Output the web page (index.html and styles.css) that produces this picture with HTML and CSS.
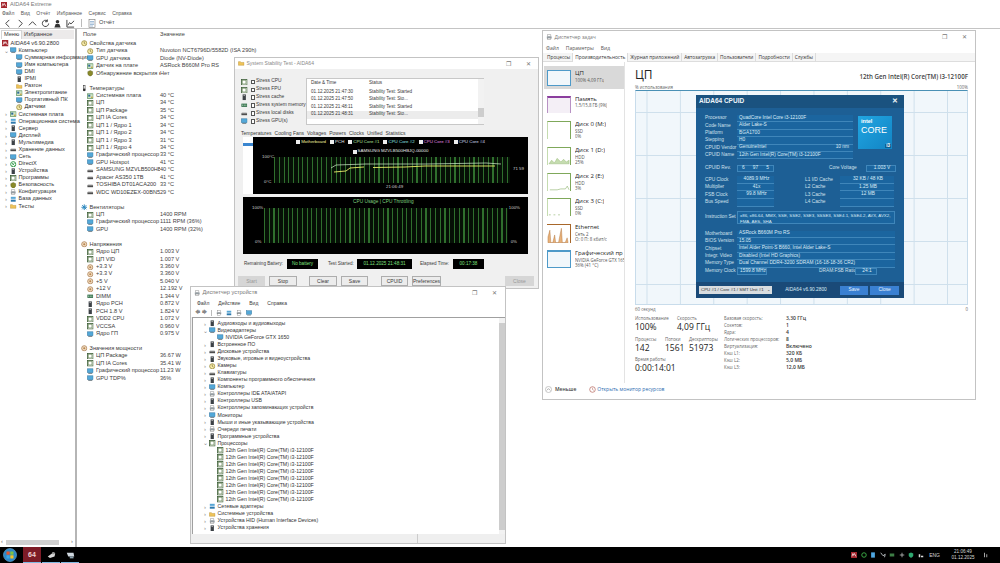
FILE: index.html
```html
<!DOCTYPE html>
<html lang="ru">
<head>
<meta charset="utf-8">
<title>AIDA64</title>
<link rel="stylesheet" href="styles.css">
</head>
<body>
<svg class="defs" aria-hidden="true">
  <symbol id="chip" viewBox="0 0 8 8"><rect x=".5" y=".5" width="7" height="7" fill="#dfe8d8" stroke="#3f5f3a"/><rect x="2" y="2" width="4" height="4" fill="#fff" stroke="#6d8a5f" stroke-width=".6"/></symbol>
  <symbol id="mon" viewBox="0 0 8 8"><rect x=".5" y="1" width="7" height="4.8" fill="#53a8d8" stroke="#2a6f9c" stroke-width=".6"/><rect x="1.5" y="6.2" width="5" height="1.2" fill="#7d8b93"/></symbol>
  <symbol id="board" viewBox="0 0 8 8"><rect x=".5" y="1" width="7" height="6" fill="#cfe3c5" stroke="#3d7d45" stroke-width=".7"/><rect x="1.5" y="2" width="2.5" height="2.5" fill="#2f6a9a"/><rect x="5" y="4.5" width="2" height="1.5" fill="#c7a03a"/></symbol>
  <symbol id="volt" viewBox="0 0 8 8"><circle cx="4" cy="4" r="3.2" fill="#f1dcc0" stroke="#a0703f" stroke-width=".8"/><circle cx="4" cy="4" r="1.3" fill="#b8854f"/></symbol>
  <symbol id="hdd" viewBox="0 0 8 8"><rect x=".5" y="4" width="7" height="2.4" fill="#4d4d4d"/><rect x="1" y="3.2" width="6" height=".8" fill="#999"/></symbol>
  <symbol id="ram" viewBox="0 0 8 8"><rect x=".5" y="2" width="7" height="4" fill="#2e6b46"/><rect x="1.3" y="3" width="1.4" height="2" fill="#8fb99d"/><rect x="3.3" y="3" width="1.4" height="2" fill="#8fb99d"/><rect x="5.3" y="3" width="1.4" height="2" fill="#8fb99d"/></symbol>
  <symbol id="tall" viewBox="0 0 8 8"><rect x="2" y=".5" width="4" height="7" fill="#3c4146"/><rect x="3" y="1.5" width="2" height="1" fill="#bbb"/></symbol>
  <symbol id="fan" viewBox="0 0 8 8"><path d="M4 .5v7M.5 4h7M1.5 1.5l5 5M6.5 1.5l-5 5" stroke="#2a86bd" stroke-width="1.2"/></symbol>
  <symbol id="sens" viewBox="0 0 8 8"><circle cx="4" cy="4" r="3.2" fill="#f6eaa8" stroke="#8a7a28" stroke-width=".8"/><path d="M4 1.8V4l1.6 1" stroke="#5d5320" stroke-width=".7" fill="none"/></symbol>
  <symbol id="shield" viewBox="0 0 8 8"><path d="M4 .6 7 2v2.2C7 6 5.5 7 4 7.6 2.500 7 1 6 1 4.200V2z" fill="#8a8a2a" stroke="#565a1a" stroke-width=".5"/></symbol>
  <symbol id="therm" viewBox="0 0 8 8"><rect x="3" y=".5" width="2" height="5" fill="#fff" stroke="#333" stroke-width=".7"/><circle cx="4" cy="6" r="1.6" fill="#333"/></symbol>
  <symbol id="folder" viewBox="0 0 8 8"><path d="M.5 2h2.500l1 1h3.500v3.500h-7z" fill="#eec35a" stroke="#b48a2a" stroke-width=".5"/></symbol>
  <symbol id="net" viewBox="0 0 8 8"><rect x="1" y="1" width="6" height="2.500" fill="#58a7d6"/><rect x="1" y="4.500" width="6" height="2.500" fill="#2d79ad"/></symbol>
  <symbol id="xbox" viewBox="0 0 8 8"><circle cx="4" cy="4" r="3.200" fill="#fff" stroke="#2f9a46" stroke-width="1.200"/><path d="M2.500 2.500l3 3M5.500 2.500l-3 3" stroke="#2f9a46"/></symbol>
  <symbol id="prn" viewBox="0 0 8 8"><rect x="2" y="1" width="4" height="2" fill="#fff" stroke="#777" stroke-width=".5"/><rect x="1" y="3" width="6" height="2.500" fill="#9aa3a9"/><rect x="2" y="5" width="4" height="2" fill="#fff" stroke="#777" stroke-width=".5"/></symbol>
  <symbol id="aida" viewBox="0 0 8 8"><rect width="8" height="8" fill="#a3262e"/><path d="M1.300 6 2.500 2l1 2.500L4.600 2 6.700 6" stroke="#fff" stroke-width=".9" fill="none"/></symbol>
</svg>

<div class="screen">
  <div class="aida">
    <div class="aida-title"><svg class="ic title-ic"><use href="#aida"/></svg><span>AIDA64 Extreme</span></div>
    <div class="aida-menu"><span>Файл</span><span>Вид</span><span>Отчёт</span><span>Избранное</span><span>Сервис</span><span>Справка</span></div>
    <div class="aida-tools">
      <svg class="tb" viewBox="0 0 10 10"><path d="M7 1 3 5l4 4" /></svg>
      <svg class="tb" viewBox="0 0 10 10"><path d="m3 1 4 4-4 4" /></svg>
      <svg class="tb" viewBox="0 0 10 10"><path d="m1 7 4-4 4 4" /></svg>
      <svg class="tb" viewBox="0 0 10 10"><path d="M8.500 5A3.500 3.500 0 1 1 7 2M7 .5V3H4.500" /></svg>
      <svg class="tb solid" viewBox="0 0 10 10"><circle cx="5" cy="3" r="2"/><path d="M1.500 9.500 3 5.500h4l1.500 4z"/></svg>
      <svg class="tb" viewBox="0 0 10 10"><path d="M1 1v8h8M2 7l2-3 1.500 1.500L9 2" /></svg>
      <span class="tb-sep"></span>
      <svg class="tb-report" viewBox="0 0 8 9"><rect x="1" y=".5" width="6" height="8" fill="#fff" stroke="#777" stroke-width=".6"/><path d="M2 2.500h4M2 4h4M2 5.500h4M2 7h3" stroke="#4b7fb0" stroke-width=".5"/></svg>
      <span class="tb-label">Отчёт</span>
    </div>
    <div class="aida-main">
      <div class="tree-pane">
        <div class="tree-tabs"><span class="t-on">Меню</span><span class="t-off">Избранное</span></div>
        <div class="tree">
          <div class="tr"><svg class="ic"><use href="#aida"/></svg>AIDA64 v6.90.2800</div>
          <div class="tr l1"><i class="chev">⌄</i><svg class="ic"><use href="#mon"/></svg>Компьютер</div>
          <div class="tr l2"><svg class="ic"><use href="#mon"/></svg>Суммарная информация</div>
          <div class="tr l2"><svg class="ic"><use href="#mon"/></svg>Имя компьютера</div>
          <div class="tr l2"><svg class="ic"><use href="#mon"/></svg>DMI</div>
          <div class="tr l2"><svg class="ic"><use href="#tall"/></svg>IPMI</div>
          <div class="tr l2"><svg class="ic"><use href="#folder"/></svg>Разгон</div>
          <div class="tr l2"><svg class="ic"><use href="#board"/></svg>Электропитание</div>
          <div class="tr l2"><svg class="ic"><use href="#mon"/></svg>Портативный ПК</div>
          <div class="tr l2 sel"><svg class="ic"><use href="#sens"/></svg>Датчики</div>
          <div class="tr l1"><i class="chev">›</i><svg class="ic"><use href="#board"/></svg>Системная плата</div>
          <div class="tr l1"><i class="chev">›</i><svg class="ic"><use href="#net"/></svg>Операционная система</div>
          <div class="tr l1"><i class="chev">›</i><svg class="ic"><use href="#tall"/></svg>Сервер</div>
          <div class="tr l1"><i class="chev">›</i><svg class="ic"><use href="#mon"/></svg>Дисплей</div>
          <div class="tr l1"><i class="chev">›</i><svg class="ic"><use href="#tall"/></svg>Мультимедиа</div>
          <div class="tr l1"><i class="chev">›</i><svg class="ic"><use href="#hdd"/></svg>Хранение данных</div>
          <div class="tr l1"><i class="chev">›</i><svg class="ic"><use href="#mon"/></svg>Сеть</div>
          <div class="tr l1"><i class="chev">›</i><svg class="ic"><use href="#xbox"/></svg>DirectX</div>
          <div class="tr l1"><i class="chev">›</i><svg class="ic"><use href="#tall"/></svg>Устройства</div>
          <div class="tr l1"><i class="chev">›</i><svg class="ic"><use href="#chip"/></svg>Программы</div>
          <div class="tr l1"><i class="chev">›</i><svg class="ic"><use href="#shield"/></svg>Безопасность</div>
          <div class="tr l1"><i class="chev">›</i><svg class="ic"><use href="#prn"/></svg>Конфигурация</div>
          <div class="tr l1"><i class="chev">›</i><svg class="ic"><use href="#net"/></svg>База данных</div>
          <div class="tr l1"><i class="chev">›</i><svg class="ic"><use href="#folder"/></svg>Тесты</div>
        </div>
        <div class="hscroll"><i>‹</i><span></span><i>›</i></div>
      </div>
      <div class="list-pane">
        <div class="list-head"><span>Поле</span><span>Значение</span></div>
        <div class="list">
          <div class="sec"><svg class="ic"><use href="#sens"/></svg>Свойства датчика</div>
          <div class="it"><svg class="ic"><use href="#sens"/></svg><span class="f">Тип датчика</span><span class="v">Nuvoton NCT6796D/5582D (ISA 290h)</span></div>
          <div class="it"><svg class="ic"><use href="#mon"/></svg><span class="f">GPU датчика</span><span class="v">Diode (NV-Diode)</span></div>
          <div class="it"><svg class="ic"><use href="#board"/></svg><span class="f">Датчик на плате</span><span class="v">ASRock B660M Pro RS</span></div>
          <div class="it"><svg class="ic"><use href="#shield"/></svg><span class="f">Обнаружение вскрытия корпуса</span><span class="v">Нет</span></div>
          <div class="gap"></div>
          <div class="sec"><svg class="ic"><use href="#therm"/></svg>Температуры</div>
          <div class="it"><svg class="ic"><use href="#board"/></svg><span class="f">Системная плата</span><span class="v">40 °C</span></div>
          <div class="it"><svg class="ic"><use href="#chip"/></svg><span class="f">ЦП</span><span class="v">34 °C</span></div>
          <div class="it"><svg class="ic"><use href="#chip"/></svg><span class="f">ЦП Package</span><span class="v">35 °C</span></div>
          <div class="it"><svg class="ic"><use href="#chip"/></svg><span class="f">ЦП IA Cores</span><span class="v">34 °C</span></div>
          <div class="it"><svg class="ic"><use href="#chip"/></svg><span class="f">ЦП 1 / Ядро 1</span><span class="v">34 °C</span></div>
          <div class="it"><svg class="ic"><use href="#chip"/></svg><span class="f">ЦП 1 / Ядро 2</span><span class="v">34 °C</span></div>
          <div class="it"><svg class="ic"><use href="#chip"/></svg><span class="f">ЦП 1 / Ядро 3</span><span class="v">31 °C</span></div>
          <div class="it"><svg class="ic"><use href="#chip"/></svg><span class="f">ЦП 1 / Ядро 4</span><span class="v">34 °C</span></div>
          <div class="it"><svg class="ic"><use href="#mon"/></svg><span class="f">Графический процессор</span><span class="v">33 °C</span></div>
          <div class="it"><svg class="ic"><use href="#mon"/></svg><span class="f">GPU Hotspot</span><span class="v">41 °C</span></div>
          <div class="it"><svg class="ic"><use href="#hdd"/></svg><span class="f">SAMSUNG MZVLB500HBJQ...</span><span class="v">40 °C</span></div>
          <div class="it"><svg class="ic"><use href="#hdd"/></svg><span class="f">Apacer AS350 1TB</span><span class="v">41 °C</span></div>
          <div class="it"><svg class="ic"><use href="#hdd"/></svg><span class="f">TOSHIBA DT01ACA200</span><span class="v">33 °C</span></div>
          <div class="it"><svg class="ic"><use href="#hdd"/></svg><span class="f">WDC WD10EZEX-00BN5A0</span><span class="v">29 °C</span></div>
          <div class="gap"></div>
          <div class="sec"><svg class="ic"><use href="#fan"/></svg>Вентиляторы</div>
          <div class="it"><svg class="ic"><use href="#chip"/></svg><span class="f">ЦП</span><span class="v">1400 RPM</span></div>
          <div class="it"><svg class="ic"><use href="#mon"/></svg><span class="f">Графический процессор</span><span class="v">1111 RPM (36%)</span></div>
          <div class="it"><svg class="ic"><use href="#mon"/></svg><span class="f">GPU</span><span class="v">1400 RPM (32%)</span></div>
          <div class="gap"></div>
          <div class="sec"><svg class="ic"><use href="#volt"/></svg>Напряжения</div>
          <div class="it"><svg class="ic"><use href="#chip"/></svg><span class="f">Ядро ЦП</span><span class="v">1.003 V</span></div>
          <div class="it"><svg class="ic"><use href="#chip"/></svg><span class="f">ЦП VID</span><span class="v">1.007 V</span></div>
          <div class="it"><svg class="ic"><use href="#volt"/></svg><span class="f">+3.3 V</span><span class="v">3.360 V</span></div>
          <div class="it"><svg class="ic"><use href="#volt"/></svg><span class="f">+3.3 V</span><span class="v">3.360 V</span></div>
          <div class="it"><svg class="ic"><use href="#volt"/></svg><span class="f">+5 V</span><span class="v">5.040 V</span></div>
          <div class="it"><svg class="ic"><use href="#volt"/></svg><span class="f">+12 V</span><span class="v">12.192 V</span></div>
          <div class="it"><svg class="ic"><use href="#ram"/></svg><span class="f">DIMM</span><span class="v">1.344 V</span></div>
          <div class="it"><svg class="ic"><use href="#tall"/></svg><span class="f">Ядро PCH</span><span class="v">0.872 V</span></div>
          <div class="it"><svg class="ic"><use href="#tall"/></svg><span class="f">PCH 1.8 V</span><span class="v">1.824 V</span></div>
          <div class="it"><svg class="ic"><use href="#chip"/></svg><span class="f">VDD2 CPU</span><span class="v">1.072 V</span></div>
          <div class="it"><svg class="ic"><use href="#chip"/></svg><span class="f">VCCSA</span><span class="v">0.960 V</span></div>
          <div class="it"><svg class="ic"><use href="#mon"/></svg><span class="f">Ядро ГП</span><span class="v">0.975 V</span></div>
          <div class="gap"></div>
          <div class="sec"><svg class="ic"><use href="#volt"/></svg>Значения мощности</div>
          <div class="it"><svg class="ic"><use href="#chip"/></svg><span class="f">ЦП Package</span><span class="v">36.67 W</span></div>
          <div class="it"><svg class="ic"><use href="#chip"/></svg><span class="f">ЦП IA Cores</span><span class="v">35.41 W</span></div>
          <div class="it"><svg class="ic"><use href="#mon"/></svg><span class="f">Графический процессор</span><span class="v">11.23 W</span></div>
          <div class="it"><svg class="ic"><use href="#mon"/></svg><span class="f">GPU TDP%</span><span class="v">36%</span></div>
        </div>
      </div>
    </div>
  </div>

  <div class="taskbar">
    <svg class="orb" viewBox="0 0 14 14"><circle cx="7" cy="7" r="6.500" fill="#2c86c6"/><circle cx="7" cy="7" r="6.500" fill="none" stroke="#6fb7e0" stroke-width=".6"/><rect x="3.500" y="3.500" width="3.200" height="3.200" fill="#e4572e"/><rect x="7.300" y="3.500" width="3.200" height="3.200" fill="#7fc241"/><rect x="3.500" y="7.300" width="3.200" height="3.200" fill="#3aa6e6"/><rect x="7.300" y="7.300" width="3.200" height="3.200" fill="#f3c324"/></svg>
    <div class="task-btn task-64"><b>64</b></div>
    <div class="task-btn"><svg class="task-ic" viewBox="0 0 12 10"><path d="M1 7 8 2l3 1-1 4-6 2z" fill="#d9d9d9"/><rect x="7" y="1" width="3" height="3" fill="#8f8f8f"/></svg></div>
    <div class="task-btn"><svg class="task-ic" viewBox="0 0 12 10"><path d="M1 2h9l1 5H3z" fill="#cfd8df"/><rect x="5" y="7" width="5" height="2.500" fill="#8aa0ad"/></svg></div>
    <div class="tray">
      <svg class="tr-ic" viewBox="0 0 8 8"><use href="#aida"/></svg>
      <svg class="tr-ic" viewBox="0 0 8 8"><circle cx="4" cy="4" r="3" fill="none" stroke="#3fb34a" stroke-width="1.200"/></svg>
      <svg class="tr-ic" viewBox="0 0 8 8"><rect x="1.500" y=".5" width="5" height="7" fill="#4ea6e0"/></svg>
      <svg class="tr-ic" viewBox="0 0 8 8"><path d="M1 1l3 4 3-2-1 4" stroke="#dfe6ea" fill="none"/></svg>
      <svg class="tr-ic" viewBox="0 0 8 8"><rect x="1" y="2" width="6" height="4" fill="#3d7d45"/></svg>
      <svg class="tr-ic" viewBox="0 0 8 8"><path d="M4 1v6M1 4h6" stroke="#c9c9c9"/></svg>
      <svg class="tr-ic" viewBox="0 0 8 8"><path d="M4 .6 7 2v2.200C7 6 5.500 7 4 7.600 2.500 7 1 6 1 4.200V2z" fill="#2fa870"/></svg>
      <svg class="tr-ic" viewBox="0 0 8 8"><rect x="1" y="3" width="2" height="4" fill="#ddd"/><rect x="4" y="5" width="3" height="2" fill="#ddd"/></svg>
      <span class="tray-t">ENG</span>
      <div class="clock"><span>21:06:49</span><span>01.12.2025</span></div>
      <svg class="tr-ic note" viewBox="0 0 8 8"><path d="M2 1v6M5 3v4" stroke="#ddd"/></svg>
    </div>
  </div>

  <!-- Stability test window -->
  <section class="win stab">
    <div class="stab-title"><svg class="ic"><use href="#folder"/></svg><span class="grow">System Stability Test - AIDA64</span><span class="wbtn">❐</span><span class="wbtn">✕</span></div>
    <div class="stab-top">
      <div class="checks">
        <div class="ck"><svg class="ic"><use href="#chip"/></svg><i class="box"></i>Stress CPU</div>
        <div class="ck"><svg class="ic"><use href="#chip"/></svg><i class="box"></i>Stress FPU</div>
        <div class="ck"><svg class="ic"><use href="#tall"/></svg><i class="box"></i>Stress cache</div>
        <div class="ck"><svg class="ic"><use href="#ram"/></svg><i class="box"></i>Stress system memory</div>
        <div class="ck"><svg class="ic"><use href="#hdd"/></svg><i class="box"></i>Stress local disks</div>
        <div class="ck"><svg class="ic"><use href="#mon"/></svg><i class="box"></i>Stress GPU(s)</div>
      </div>
      <div class="log">
        <div class="log-rows">
          <div class="lr head"><span>Date &amp; Time</span><span>Status</span></div>
          <div class="lr"><span>01.12.2025 21:47:30</span><span>Stability Test: Started</span></div>
          <div class="lr"><span>01.12.2025 21:47:50</span><span>Stability Test: Sto...</span></div>
          <div class="lr"><span>01.12.2025 21:48:11</span><span>Stability Test: Started</span></div>
          <div class="lr alt"><span>01.12.2025 21:48:31</span><span>Stability Test: Sto...</span></div>
        </div>
        <div class="vscroll"><i class="thumb"></i></div>
      </div>
    </div>
    <div class="stab-tabs"><span>Temperatures</span><span>Cooling Fans</span><span>Voltages</span><span>Powers</span><span>Clocks</span><span>Unified</span><span>Statistics</span></div>
    <div class="g1-wrap">
      <div class="strip"><i></i></div>
      <div class="graph g1">
        <div class="bars bars1"></div>
        <div class="legend">
          <div><span class="lg c1"><i></i>Motherboard</span><span class="lg c2"><i></i>PCH</span><span class="lg c3"><i></i>CPU Core #1</span><span class="lg c4"><i></i>CPU Core #2</span><span class="lg c5"><i></i>CPU Core #3</span><span class="lg c6"><i></i>CPU Core #4</span></div>
          <div><span class="lg c2"><i></i>SAMSUNG MZVLB500HBJQ-00000</span></div>
        </div>
        <svg class="curve" viewBox="0 0 275 57"><path d="M78 31l5-3 30-1 60 0 60-1 15 1" stroke="#d7f0d0" fill="none" stroke-width=".7"/><path d="M81 35l12-1 4-3 14-1M120 30.500l32-.5 20-1 20 0 50 0" stroke="#ecec6a" fill="none" stroke-width=".9"/></svg>
        <span class="scale s-top">100°C</span><span class="scale s-bot">0°C</span><span class="scale s-time">21:06:49</span><span class="scale s-right">71 59</span>
      </div>
    </div>
    <div class="graph g2">
      <div class="bars bars2"></div>
      <span class="g2-title">CPU Usage | CPU Throttling</span>
      <span class="scale t2">100%</span><span class="scale b2">0%</span><span class="scale t2r">100%</span><span class="scale b2r">0%</span>
    </div>
    <div class="stab-info">
      <span class="inf l1w">Remaining Battery:</span><span class="lcd w1">No battery</span>
      <span class="inf l2w">Test Started:</span><span class="lcd w2">01.12.2025 21:48:31</span>
      <span class="inf l3w">Elapsed Time:</span><span class="lcd w3">00:17:38</span>
    </div>
    <div class="stab-btns">
      <span class="btn off w27">Start</span><span class="btn w28">Stop</span>
      <span class="btn w28 m12">Clear</span><span class="btn w27">Save</span>
      <span class="btn w27 m13">CPUID</span><span class="btn w29">Preferences</span>
      <span class="btn off w29 mauto">Close</span>
    </div>
  </section>

  <!-- Device manager -->
  <section class="win dm">
    <div class="dm-title"><svg class="ic"><use href="#prn"/></svg><span class="grow">Диспетчер устройств</span><span class="wbtn">❐</span><span class="wbtn">✕</span></div>
    <div class="dm-menu"><span>Файл</span><span>Действие</span><span>Вид</span><span>Справка</span></div>
    <div class="dm-tools">
      <i class="arrow">🡄</i><i class="arrow">🡆</i><span class="tb-sep short"></span>
      <svg class="ic big"><use href="#prn"/></svg><svg class="ic big"><use href="#net"/></svg><svg class="ic big"><use href="#prn"/></svg><svg class="ic big"><use href="#mon"/></svg>
    </div>
    <div class="dm-body">
      <div class="dm-list">
        <div class="dr"><i class="chev">›</i><svg class="ic"><use href="#tall"/></svg>Аудиовходы и аудиовыходы</div>
        <div class="dr"><i class="chev">⌄</i><svg class="ic"><use href="#mon"/></svg>Видеоадаптеры</div>
        <div class="dr child"><svg class="ic"><use href="#mon"/></svg>NVIDIA GeForce GTX 1650</div>
        <div class="dr"><i class="chev">›</i><svg class="ic"><use href="#tall"/></svg>Встроенное ПО</div>
        <div class="dr"><i class="chev">›</i><svg class="ic"><use href="#hdd"/></svg>Дисковые устройства</div>
        <div class="dr"><i class="chev">›</i><svg class="ic"><use href="#tall"/></svg>Звуковые, игровые и видеоустройства</div>
        <div class="dr"><i class="chev">›</i><svg class="ic"><use href="#sens"/></svg>Камеры</div>
        <div class="dr"><i class="chev">›</i><svg class="ic"><use href="#hdd"/></svg>Клавиатуры</div>
        <div class="dr"><i class="chev">›</i><svg class="ic"><use href="#tall"/></svg>Компоненты программного обеспечения</div>
        <div class="dr"><i class="chev">›</i><svg class="ic"><use href="#mon"/></svg>Компьютер</div>
        <div class="dr"><i class="chev">›</i><svg class="ic"><use href="#prn"/></svg>Контроллеры IDE ATA/ATAPI</div>
        <div class="dr"><i class="chev">›</i><svg class="ic"><use href="#tall"/></svg>Контроллеры USB</div>
        <div class="dr"><i class="chev">›</i><svg class="ic"><use href="#prn"/></svg>Контроллеры запоминающих устройств</div>
        <div class="dr"><i class="chev">›</i><svg class="ic"><use href="#mon"/></svg>Мониторы</div>
        <div class="dr"><i class="chev">›</i><svg class="ic"><use href="#tall"/></svg>Мыши и иные указывающие устройства</div>
        <div class="dr"><i class="chev">›</i><svg class="ic"><use href="#prn"/></svg>Очереди печати</div>
        <div class="dr"><i class="chev">›</i><svg class="ic"><use href="#tall"/></svg>Программные устройства</div>
        <div class="dr"><i class="chev">⌄</i><svg class="ic"><use href="#chip"/></svg>Процессоры</div>
        <div class="dr child"><svg class="ic"><use href="#chip"/></svg>12th Gen Intel(R) Core(TM) i3-12100F</div>
        <div class="dr child"><svg class="ic"><use href="#chip"/></svg>12th Gen Intel(R) Core(TM) i3-12100F</div>
        <div class="dr child"><svg class="ic"><use href="#chip"/></svg>12th Gen Intel(R) Core(TM) i3-12100F</div>
        <div class="dr child"><svg class="ic"><use href="#chip"/></svg>12th Gen Intel(R) Core(TM) i3-12100F</div>
        <div class="dr child"><svg class="ic"><use href="#chip"/></svg>12th Gen Intel(R) Core(TM) i3-12100F</div>
        <div class="dr child"><svg class="ic"><use href="#chip"/></svg>12th Gen Intel(R) Core(TM) i3-12100F</div>
        <div class="dr child"><svg class="ic"><use href="#chip"/></svg>12th Gen Intel(R) Core(TM) i3-12100F</div>
        <div class="dr child"><svg class="ic"><use href="#chip"/></svg>12th Gen Intel(R) Core(TM) i3-12100F</div>
        <div class="dr"><i class="chev">›</i><svg class="ic"><use href="#net"/></svg>Сетевые адаптеры</div>
        <div class="dr"><i class="chev">›</i><svg class="ic"><use href="#folder"/></svg>Системные устройства</div>
        <div class="dr"><i class="chev">›</i><svg class="ic"><use href="#prn"/></svg>Устройства HID (Human Interface Devices)</div>
        <div class="dr"><i class="chev">›</i><svg class="ic"><use href="#tall"/></svg>Устройства хранения</div>
      </div>
      <div class="vscroll dm-scroll"><i class="thumb"></i></div>
    </div>
    <div class="dm-status"><span></span><span></span></div>
  </section>

  <!-- Task manager -->
  <section class="win tm">
    <div class="tm-title"><svg class="ic"><use href="#prn"/></svg><span class="grow">Диспетчер задач</span><span class="wbtn">❐</span><span class="wbtn">✕</span></div>
    <div class="tm-menu"><span>Файл</span><span>Параметры</span><span>Вид</span></div>
    <div class="tm-tabs"><span>Процессы</span><span class="on">Производительность</span><span>Журнал приложений</span><span>Автозагрузка</span><span>Пользователи</span><span>Подробности</span><span>Службы</span></div>
    <div class="tm-main">
      <div class="side">
        <div class="si sel"><div class="th th-cpu"></div><div class="st"><b>ЦП</b><span>100% 4,09 ГГц</span></div></div>
        <div class="si"><div class="th th-mem"></div><div class="st"><b>Память</b><span>1,5/15,8 ГБ (9%)</span></div></div>
        <div class="si"><div class="th th-disk"></div><div class="st"><b>Диск 0 (M:)</b><span>SSD</span><span>0%</span></div></div>
        <div class="si"><div class="th th-disk"><svg viewBox="0 0 24 18"><path d="M1 17l3-4 3 3 3-5 4 4 3-3 3 3 3-2v4H1z" fill="#c5dcb0" stroke="#7fa85a" stroke-width=".4"/></svg></div><div class="st"><b>Диск 1 (D:)</b><span>HDD</span><span>25%</span></div></div>
        <div class="si"><div class="th th-disk"><svg viewBox="0 0 24 18"><path d="M2 17h8l4-1h5l2-3 2 4" fill="none" stroke="#7fa85a" stroke-width=".6"/></svg></div><div class="st"><b>Диск 2 (E:)</b><span>HDD</span><span>3%</span></div></div>
        <div class="si"><div class="th th-disk"><svg viewBox="0 0 24 18"><path d="M1 17h2M6 17h2M11 17h2" fill="none" stroke="#7fa85a" stroke-width=".6"/></svg></div><div class="st"><b>Диск 3 (C:)</b><span>SSD</span><span>0%</span></div></div>
        <div class="si"><div class="th th-eth"><svg viewBox="0 0 24 18"><path d="M1 18V12l2-7 1 13h2l2-8 1 8h3l3-15 1 15h3l2-5 1 5z" fill="#e8b27a" stroke="#a8672a" stroke-width=".4"/></svg></div><div class="st"><b>Ethernet</b><span>Сеть 2</span><span>О: 0 П: 8 кбит/с</span></div></div>
        <div class="si"><div class="th th-cpu th-gpu"></div><div class="st"><b>Графический пр</b><span>NVIDIA GeForce GTX 1650</span><span>36% (41 °C)</span></div></div>
      </div>
      <div class="perf">
        <div class="perf-head"><span class="perf-h1">ЦП</span><span class="perf-name">12th Gen Intel(R) Core(TM) i3-12100F</span></div>
        <div class="perf-sub"><span>% использования</span><span>100%</span></div>
        <div class="perf-graph"></div>
        <div class="perf-sub axis"><span>60 секунд</span><span>0</span></div>
        <div class="stats">
          <div class="st-left">
            <div class="s-row"><div class="s-cell w42"><small>Использование</small><strong>100%</strong></div><div class="s-cell"><small>Скорость</small><strong>4,09 ГГц</strong></div></div>
            <div class="s-row"><div class="s-cell w30"><small>Процессы</small><strong>142</strong></div><div class="s-cell w24"><small>Потоки</small><strong>1561</strong></div><div class="s-cell"><small>Дескрипторы</small><strong>51973</strong></div></div>
            <div class="s-row"><div class="s-cell"><small>Время работы</small><strong>0:00:14:01</strong></div></div>
          </div>
          <div class="st-right">
            <div class="kv"><span>Базовая скорость:</span><b>3,30 ГГц</b></div>
            <div class="kv"><span>Сокетов:</span><b>1</b></div>
            <div class="kv"><span>Ядра:</span><b>4</b></div>
            <div class="kv"><span>Логических процессоров:</span><b>8</b></div>
            <div class="kv"><span>Виртуализация:</span><b>Включено</b></div>
            <div class="kv"><span>Кэш L1:</span><b>320 КБ</b></div>
            <div class="kv"><span>Кэш L2:</span><b>5,0 МБ</b></div>
            <div class="kv"><span>Кэш L3:</span><b>12,0 МБ</b></div>
          </div>
        </div>
      </div>
    </div>
    <div class="tm-foot">
      <svg class="foot-ic" viewBox="0 0 8 8"><circle cx="4" cy="4" r="3.500" fill="none" stroke="#999" stroke-width=".6"/><path d="M2 5l2-2 2 2" fill="none" stroke="#666" stroke-width=".6"/></svg>
      <b>Меньше</b>
      <svg class="foot-ic res" viewBox="0 0 8 8"><circle cx="4" cy="4" r="3.200" fill="none" stroke="#b5645a" stroke-width=".8"/><path d="M4 2v2l1.500 1" fill="none" stroke="#b5645a" stroke-width=".6"/></svg>
      <a>Открыть монитор ресурсов</a>
    </div>
  </section>

  <!-- CPUID window -->
  <section class="win cpuid">
    <div class="cp-title"><span class="grow">AIDA64 CPUID</span><span>✕</span></div>
    <div class="cp-body">
      <div class="cp-g1">
        <div class="cp-rows">
          <div class="cr"><label>Processor</label><span>QuadCore Intel Core i3-12100F</span></div>
          <div class="cr"><label>Code Name</label><span>Alder Lake-S</span></div>
          <div class="cr"><label>Platform</label><span>BGA1700</span></div>
          <div class="cr"><label>Stepping</label><span>H0</span></div>
          <div class="cr"><label>CPUID Vendor</label><span class="sb"><em>GenuineIntel</em><em>10 nm</em></span></div>
          <div class="cr"><label>CPUID Name</label><span>12th Gen Intel(R) Core(TM) i3-12100F</span></div>
        </div>
        <div class="logo"><span class="l-intel">intel</span><span class="l-core">CORE</span><span class="l-i3">i3</span></div>
      </div>
      <div class="cp-g2">
        <div class="cr half"><label>CPUID Rev.</label><span class="triple"><em>6</em><em>97</em><em>5</em></span></div>
        <div class="cr half right"><label>Core Voltage</label><span class="short">1.003 V</span></div>
      </div>
      <div class="cp-g3">
        <div class="col">
          <div class="cr short-l"><label>CPU Clock</label><span class="c">4089.9 MHz</span></div>
          <div class="cr short-l"><label>Multiplier</label><span class="c">41x</span></div>
          <div class="cr short-l"><label>FSB Clock</label><span class="c">99.8 MHz</span></div>
          <div class="cr short-l"><label>Bus Speed</label><span class="c"></span></div>
        </div>
        <div class="col">
          <div class="cr wide-l"><label>L1 I/D Cache</label><span class="c">32 KB / 48 KB</span></div>
          <div class="cr wide-l"><label>L2 Cache</label><span class="c">1.25 MB</span></div>
          <div class="cr wide-l"><label>L3 Cache</label><span class="c">12 MB</span></div>
          <div class="cr wide-l"><label>L4 Cache</label><span class="c"></span></div>
        </div>
      </div>
      <div class="cp-instr"><label>Instruction Set</label><span>x86, x86-64, MMX, SSE, SSE2, SSE3, SSSE3, SSE4.1, SSE4.2, AVX, AVX2, FMA, AES, SHA</span></div>
      <div class="cp-g5">
        <div class="cr"><label>Motherboard</label><span>ASRock B660M Pro RS</span></div>
        <div class="cr"><label>BIOS Version</label><span>15.05</span></div>
        <div class="cr"><label>Chipset</label><span>Intel Alder Point-S B660, Intel Alder Lake-S</span></div>
        <div class="cr"><label>Integr. Video</label><span>Disabled (Intel HD Graphics)</span></div>
        <div class="cr"><label>Memory Type</label><span>Dual Channel DDR4-3200 SDRAM (16-18-18-36 CR2)</span></div>
        <div class="cr split"><label>Memory Clock</label><span class="mem">1599.8 MHz</span><label class="ratio">DRAM:FSB Ratio</label><span class="mem r">24:1</span></div>
      </div>
    </div>
    <div class="cp-foot">
      <span class="cp-sel">CPU #1 / Core #1 / SMT Unit #1<i>⌄</i></span>
      <span class="cp-ver">AIDA64 v6.90.2800</span>
      <span class="cp-btn">Save</span><span class="cp-btn">Close</span>
    </div>
  </section>
</div>
</body>
</html>
```
FILE: styles.css
```css
* { box-sizing: border-box; }
html, body { margin: 0; padding: 0; background: #fff; }
body { font: 5.6px/1 "Liberation Sans", Arial, sans-serif; color: #3a3a3a; }
.defs { display: none; }
.screen { position: relative; width: 1000px; height: 563px; overflow: hidden; display: flex; flex-direction: column; }
.ic { width: 6.5px; height: 6.5px; flex: none; display: block; }
.grow { flex: 1; }
.wbtn { width: 18px; text-align: center; color: #777; font-size: 6px; }

/* AIDA main window */
.aida { height: 547px; display: flex; flex-direction: column; flex: none; }
.aida-title { height: 9px; display: flex; align-items: center; gap: 3px; padding: 1px 0 0 1px; color: #777; }
.title-ic { width: 6px; height: 6px; }
.aida-menu { height: 9px; padding: 0 0 0 2px; display: flex; align-items: center; gap: 6.500px; color: #555; font-size: 5px; }
.aida-tools { height: 10px; display: flex; align-items: center; padding: 0 0 0 3px; gap: 3.500px; border-bottom: 1px solid #c4c4c4; height: 11px; }
.tb { width: 9px; height: 9px; fill: none; stroke: #333; stroke-width: 1; flex: none; }
.tb.solid { fill: #333; stroke: none; }
.tb-sep { width: 1px; height: 8px; background: #bbb; margin: 0 1px 0 3px; }
.tb-report { width: 8px; height: 9px; margin-left: 1px; }
.tb-label { color: #444; }
.aida-main { flex: 1; display: flex; min-height: 0; }
.tree-pane { width: 77px; border-right: 2px solid #b5b5b5; display: flex; flex-direction: column; flex: none; }
.tree-tabs { height: 9px; display: flex; margin-top: 1px; padding-left: 1px; }
.tree-tabs span { display: flex; align-items: center; padding-left: 2px; }
.t-on { width: 21px; background: #fff; border: 1px solid #d5d5d5; border-bottom: 0; }
.t-off { width: 52px; background: #eceaea; padding-left: 2px; }
.tree { flex: 1; padding-top: 1px; }
.tr { height: 7.080px; display: flex; align-items: center; gap: 2px; padding-left: 2px; white-space: nowrap; color: #333; }
.tr.l1 { padding-left: 4px; }
.tr.l2 { padding-left: 16px; }
.tr.sel span, .tr.sel { color: #222; }
.chev { width: 4px; font-style: normal; color: #8a8a8a; font-size: 6px; text-align: center; flex: none; line-height: 1; }
.hscroll { height: 6px; margin-bottom: 2px; padding: 0 1px; display: flex; align-items: center; color: #666; gap: 2px; }
.hscroll i { font-style: normal; width: 3px; }
.hscroll span { flex: 1; height: 5px; background: #cfcfcf; margin-right: 10px; }
.list-pane { flex: 1; padding-left: 6px; }
.list-head { height: 9px; display: flex; align-items: center; margin-top: 1px; color: #444; }
.list-head span:first-child { width: 77px; }
.list { padding-top: 1px; }
.sec, .it, .gap { height: 7.440px; }
.sec { display: flex; align-items: center; gap: 2px; margin-left: -2px; white-space: nowrap; }
.it { display: flex; align-items: center; padding-left: 4px; white-space: nowrap; }
.it .ic { margin-right: 2.500px; }
.f { width: 64px; overflow: hidden; flex: none; }
.v { color: #444; }

/* Taskbar */
.taskbar { height: 16px; background: #000; display: flex; align-items: center; padding-left: 3px; flex: none; position: relative; }
.orb { width: 14px; height: 14px; margin-right: 6px; flex: none; }
.task-btn { width: 18px; height: 16px; display: flex; align-items: center; justify-content: center; border-bottom: 1px solid #7fb8e0; margin-right: 1px; }
.task-64 { background: #7d1b26; color: #f0d0d0; font-size: 7px; }
.task-ic { width: 9px; height: 8px; }
.tray { margin-left: auto; display: flex; align-items: center; gap: 3.500px; padding-right: 11px; color: #d8d8d8; }
.tr-ic { width: 6px; height: 6px; flex: none; }
.tray-t { margin: 0 4px 0 2px; font-size: 5px; }
.clock { display: flex; flex-direction: column; align-items: center; gap: 1.500px; font-size: 4.600px; margin: 0 5px 0 4px; }

/* Floating windows */
.win { position: absolute; background: #fff; box-shadow: 0 0 0 1px #c3c3c3; }

/* Stability test */
.stab { left: 235px; top: 58px; width: 303px; height: 230px; background: #f0f0f0; display: flex; flex-direction: column; }
.stab-title { height: 11px; background: #fff; display: flex; align-items: center; gap: 2px; padding: 0 1px 0 3px; color: #888; font-size: 5px; }
.stab-top { display: flex; height: 47px; margin-top: 9px; padding-left: 6px; }
.checks { width: 65px; }
.ck { height: 7.900px; display: flex; align-items: center; white-space: nowrap; font-size: 4.900px; }
.box { width: 4.500px; height: 4.500px; border: 1px solid #555; background: #fff; margin: 0 1px 0 3px; flex: none; }
.log { width: 178px; background: #fff; border: 1px solid #c8c8c8; border-width: 1px 0 1px 1px; display: flex; }
.log-rows { flex: 1; }
.lr { height: 7.500px; display: flex; align-items: center; padding-left: 4px; font-size: 4.600px; white-space: nowrap; }
.lr.head { height: 8.500px; margin-bottom: 1px; }
.lr.alt { background: #ececec; }
.lr span:first-child { width: 58px; }
.vscroll { width: 6px; background: #f2f2f2; padding-top: 29px; flex: none; }
.thumb { display: block; height: 9px; background: #cdcdcd; }
.stab-tabs { height: 8px; margin: 4px 0 0 6px; display: flex; gap: 3px; font-size: 5px; align-items: center; }
.g1-wrap { display: flex; height: 57px; margin-left: 8px; width: 285px; }
.strip { width: 10px; background: #fff; }
.strip i { display: block; height: 3px; margin-top: 6px; background: #3a86d0; }
.graph { background: #000; position: relative; color: #d5e5d5; flex: none; }
.g1 { width: 275px; }
.g2 { width: 285px; height: 57px; margin: 3px 0 0 8px; }
.bars { position: absolute; background: repeating-linear-gradient(90deg, #2f6f2d 0, #2f6f2d 1px, #061006 1px, #061006 4.750px); }
.bars1 { left: 21px; right: 18px; top: 20px; height: 26px; }
.bars2 { left: 21px; right: 20px; top: 11px; height: 35px; }
.legend { position: absolute; left: 0; right: 0; top: 2px; display: flex; flex-direction: column; align-items: center; gap: 3.500px; font-size: 4.400px; }
.legend div { display: flex; gap: 4px; height: 6px; align-items: center; }
.lg { display: flex; align-items: center; gap: 1px; white-space: nowrap; }
.lg i { width: 4px; height: 4px; background: #eee; }
.c1 { color: #f2ef9a; } .c2 { color: #eaeaea; } .c3 { color: #b7f0a0; } .c4 { color: #8ee8e8; } .c5 { color: #e68ae6; } .c6 { color: #cfd8f0; }
.curve { position: absolute; inset: 0; width: 100%; height: 100%; }
.scale { position: absolute; font-size: 4.400px; color: #cfcfcf; white-space: nowrap; }
.s-top { left: 9px; top: 18px; } .s-bot { left: 11px; top: 43px; } .s-time { left: 133px; top: 48px; } .s-right { left: 260px; top: 30px; }
.t2 { left: 9px; top: 9px; } .b2 { left: 12px; top: 43px; } .t2r { right: 8px; top: 9px; } .b2r { right: 11px; top: 43px; }
.g2-title { position: absolute; left: 110px; top: 3px; font-size: 4.800px; color: #7fd07f; }
.stab-info { height: 10px; margin: 5px 0 0 9px; display: flex; align-items: center; font-size: 4.600px; white-space: nowrap; }
.lcd { height: 10px; background: #000; color: #7fe07f; display: flex; align-items: center; justify-content: center; }
.l1w { width: 43px; } .w1 { width: 31px; } .l2w { width: 29px; margin-left: 10px; } .w2 { width: 55px; } .l3w { width: 33px; margin-left: 8px; } .w3 { width: 31px; }
.stab-btns { display: flex; margin: 7px 4px 0 3px; height: 10px; font-size: 5px; }
.btn { height: 10px; background: #ececec; border: 1px solid #adadad; display: flex; align-items: center; justify-content: center; margin-right: 4px; flex: none; }
.btn.off { background: #d6d6d6; border-color: #d6d6d6; color: #999; }
.w27 { width: 27px; } .w28 { width: 28px; } .w29 { width: 29px; margin-right: 0; }
.m12 { margin-left: 8px; } .m13 { margin-left: 9px; } .mauto { margin-left: auto; }

/* Device manager */
.dm { left: 191px; top: 287px; width: 314px; height: 256px; display: flex; flex-direction: column; background: #f0f0f0; }
.dm-title { height: 12px; background: #fff; display: flex; align-items: center; gap: 2px; padding: 0 2px 0 3px; color: #777; flex: none; }
.dm-menu { height: 9px; background: #fff; display: flex; align-items: center; gap: 9px; padding-left: 6px; flex: none; font-size: 5px; }
.dm-tools { height: 9px; background: #fff; display: flex; align-items: center; gap: 2px; padding-left: 4px; flex: none; }
.arrow { font-style: normal; color: #888; font-size: 5px; }
.tb-sep.short { height: 6px; margin: 0 2px; }
.big { width: 6px; height: 6px; margin-right: 2px; }
.dm-body { flex: 1; display: flex; background: #fff; border-top: 1px solid #a0a0a0; border-left: 1px solid #a0a0a0; margin-left: 1px; min-height: 0; }
.dm-list { flex: 1; padding-top: 2px; }
.dr { height: 7.060px; display: flex; align-items: center; gap: 2px; padding-left: 10px; white-space: nowrap; font-size: 5.200px; color: #333; }
.dr .chev { margin-right: 0; }
.dr.child { padding-left: 24px; }
.dm-scroll { padding-top: 5px; display: flex; width: 6px; }
.dm-scroll .thumb { height: auto; width: 100%; margin-bottom: 4px; }
.dm-status { height: 9px; background: #efefef; display: flex; flex: none; }
.dm-status span:first-child { width: 227px; border-right: 1px solid #ccc; }

/* Task manager */
.tm { left: 543px; top: 31px; width: 432px; height: 368px; font-family: "Open Sans", "Noto Sans", sans-serif; display: flex; flex-direction: column; }
.tm-title { height: 12px; display: flex; align-items: center; gap: 2px; padding: 0 2px 0 3px; color: #777; font-size: 5px; flex: none; }
.tm-menu { height: 10px; display: flex; align-items: center; gap: 7px; padding-left: 3px; font-size: 5px; color: #555; flex: none; }
.tm-tabs { height: 9px; display: flex; align-items: center; padding-left: 2px; background: #f5f5f5; font-size: 4.800px; border-bottom: 1px solid #ddd; flex: none; color: #333; }
.tm-tabs span { padding: 0 2px; height: 9px; display: flex; align-items: center; border-right: 1px solid #dcdcdc; white-space: nowrap; }
.tm-tabs .on { background: #fff; }
.tm-main { flex: 1; display: flex; min-height: 0; }
.side { width: 82px; border-right: 1px solid #e3e3e3; padding-top: 4px; flex: none; }
.si { height: 25.700px; display: flex; padding: 4px 0 0 4px; gap: 4px; }
.si.sel { background: #d9d9d9; height: 23px; margin: 0 0 2.700px 1px; padding-left: 3px; }
.th { width: 24px; height: 17px; flex: none; overflow: hidden; }
.th svg { display: block; width: 100%; height: 100%; }
.th-cpu { background: #f1f7fb; border: 1px solid #4e9ac9; height: 16px; }
.th-gpu { border-top-width: 2px; height: 18px; }
.th-mem { background: #f4eff6; border-top: 2px solid #8b3e9e; border-left: 1px solid #b892c4; border-right: 1px solid #b892c4; }
.th-disk { background: #fff; border-top: 1px solid #7fa85a; border-right: 1px solid #7fa85a; border-left: 1px solid #c5dcb0; height: 18px; }
.th-eth { background: #fff; border-top: 1px solid #a8672a; border-right: 1px solid #a8672a; height: 19px; }
.st { display: flex; flex-direction: column; gap: .8px; font-size: 4.400px; white-space: nowrap; overflow: hidden; color: #555; }
.st b { font-size: 6px; font-weight: 400; color: #222; line-height: 7px; }
.perf { flex: 1; padding: 1px 7px 0 10px; min-width: 0; }
.perf-head { height: 21px; display: flex; align-items: flex-end; justify-content: space-between; padding-bottom: 3px; }
.perf-h1 { font-size: 12px; color: #222; }
.perf-name { font-size: 6.200px; font-weight: 600; color: #444; padding-bottom: 1px; }
.perf-sub { height: 6px; display: flex; justify-content: space-between; font-size: 4.400px; color: #666; align-items: center; }
.perf-sub.axis { height: 8px; }
.perf-graph { height: 215px; background-color: #f1f7fb; border-top: 1px solid #4a90b5; border-left: 1px solid #c8dceb; border-right: 1px solid #c8dceb; border-bottom: 1px solid #c8dceb;
  background-image: linear-gradient(#cfe0ec 1px, transparent 1px), linear-gradient(90deg, #cfe0ec 1px, transparent 1px);
  background-size: 33.400px 43px; background-position: 10.500px 21px; }
.stats { display: flex; padding-top: 2px; }
.st-left { width: 89px; }
.s-row { display: flex; margin-bottom: 2.500px; }
.s-cell { display: flex; flex-direction: column; white-space: nowrap; }
.s-cell small { font-size: 4.400px; color: #666; height: 6px; line-height: 6px; }
.s-cell strong { font-size: 8.500px; font-weight: 400; height: 12px; line-height: 12px; color: #222; }
.w42 { width: 42px; } .w30 { width: 30px; } .w24 { width: 24px; }
.kv { height: 7px; display: flex; align-items: center; font-size: 4.400px; color: #666; white-space: nowrap; }
.kv span { width: 62px; }
.kv b { font-size: 5px; font-weight: 600; color: #333; }
.tm-foot { height: 16px; display: flex; align-items: center; padding-left: 2px; font-size: 5px; flex: none; border-top: 0; padding-bottom: 3px; }
.foot-ic { width: 7px; height: 7px; margin-right: 3px; }
.foot-ic.res { margin: 0 1px 0 13px; }
.tm-foot b { font-weight: 600; color: #444; }
.tm-foot a { color: #2a6ab0; }

/* CPUID */
.cpuid { left: 696px; top: 95px; width: 208px; height: 203px; background: #1d5f95; color: #dcebf5; display: flex; flex-direction: column; font-size: 4.800px; box-shadow: none; }
.cp-title { height: 13px; background: #1a527f; display: flex; align-items: center; padding: 0 6px 0 3px; font-size: 6.500px; font-weight: 700; color: #eef5fa; flex: none; }
.cp-body { padding: 7px 9px 0; flex: 1; }
.cr { height: 7.400px; display: flex; align-items: center; white-space: nowrap; }
.cr label { width: 32px; flex: none; color: #cfe0ec; }
.cr > span { flex: 1; height: 100%; padding-left: 2px; border-bottom: 1px solid #3f86ba; background: #1b659f; display: flex; align-items: center; }
.cp-g1 { display: flex; gap: 5px; }
.cp-rows { width: 148px; flex: none; }
.sb { justify-content: space-between; padding-right: 4px; }
em { font-style: normal; }
.logo { width: 34px; height: 33px; margin-top: 1px; background: linear-gradient(135deg, #21a6e2, #1284c4); position: relative; display: flex; flex-direction: column; padding: 3px 0 0 3px; color: #fff; }
.l-intel { font-size: 5.500px; font-weight: 700; }
.l-core { font-size: 9px; font-weight: 400; line-height: 11px; }
.l-i3 { position: absolute; right: 1px; bottom: 1px; font-size: 4.500px; background: #0f5f90; padding: 0 1px; font-weight: 700; }
.cp-g2 { display: flex; margin-top: 5.500px; }
.half { width: 95px; }
.half .triple { flex: none; width: 37px; padding: 0; border: 1px solid #3f86ba; display: flex; justify-content: space-around; }
.half.right { margin-left: 0; width: 94px; }
.half.right label { width: 64px; padding-left: 29px; width: 66px; }
.half.right .short { flex: none; width: 30px; justify-content: center; border: 1px solid #3f86ba; }
.cp-g3 { display: flex; margin-top: 4px; }
.col { flex: none; }
.col:first-child { width: 75px; }
.col .cr { height: 7.600px; }
.short-l label { width: 32px; }
.short-l .c { flex: none; width: 37px; }
.wide-l label { width: 60px; padding-left: 25px; }
.wide-l .c { flex: none; width: 54px; }
.c { justify-content: center; }
.cp-instr { display: flex; margin-top: 4.500px; height: 13px; }
.cp-instr label { width: 32px; flex: none; color: #cfe0ec; padding-top: 4px; white-space: nowrap; }
.cp-instr span { flex: 1; background: #1b659f; border: 1px solid #3f86ba; padding: 1px 2px; line-height: 5.500px; font-size: 4.400px; }
.cp-g5 { margin-top: 6.500px; }
.split .mem { flex: none; width: 30px; justify-content: center; border: 1px solid #3f86ba; }
.split .ratio { width: 88px; padding-left: 52px; white-space: nowrap; }
.split .mem.r { width: 22px; }
.cp-foot { height: 16px; background: #1a4a78; display: flex; align-items: center; padding: 0 3px; flex: none; color: #dcebf5; }
.cp-sel { width: 74px; height: 7.500px; background: #d9dde0; color: #333; display: flex; align-items: center; justify-content: space-between; padding: 0 2px; white-space: nowrap; font-size: 4.400px; overflow: hidden; }
.cp-sel i { font-style: normal; }
.cp-ver { width: 68px; text-align: center; }
.cp-btn { width: 29px; height: 9px; background: #3a80d2; color: #e8f2fb; display: flex; align-items: center; justify-content: center; margin-right: 2px; }
```
